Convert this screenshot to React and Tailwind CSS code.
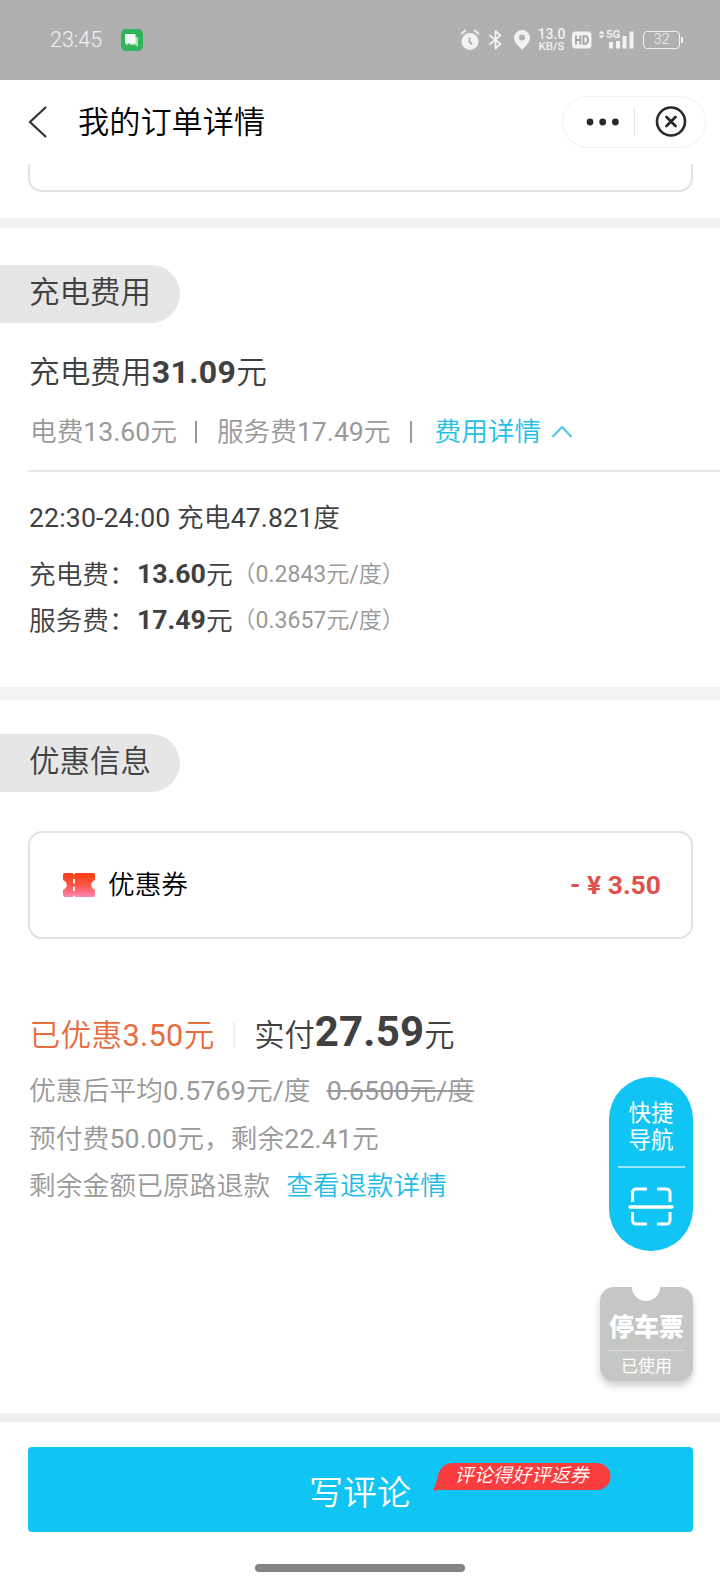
import React from "react";

// Latin digits and signs use the regular weight; the surrounding Chinese text is lighter.
function Mixed({ text }) {
  return text.split(/([0-9.:\/-]+)/).map((part, i) =>
    i % 2 ? (
      <span key={i} className="font-normal">{part}</span>
    ) : (
      part
    )
  );
}

function StatusBar() {
  return (
    <div className="flex h-20 shrink-0 items-center bg-[#b0b0b0] pl-[50px] text-[#f2f2f2]">
      <span className="w-[71px] text-[21.500px] leading-none">23:45</span>
      <svg width="22" height="22" viewBox="0 0 22 22">
        <rect width="22" height="22" rx="5" fill="#2fb457" />
        <path d="M9 8h8v10l-2.5-2H9z" fill="#a5e2b6" />
        <path d="M4 5h10.500v9.500H7.500L5.500 16.500V14.500H4z" fill="#f1fbf4" />
      </svg>
      <svg className="ml-[317px]" width="20" height="22" viewBox="0 0 20 22">
        <circle cx="10" cy="12.500" r="8.500" fill="#f2f2f2" />
        <path d="M1.500 4.500 5.500 1.500M18.500 4.500 14.500 1.500" stroke="#f2f2f2" strokeWidth="1.800" strokeLinecap="round" />
        <path d="M9.500 9v4l2.200 2" stroke="#aaa" strokeWidth="1.700" fill="none" strokeLinecap="round" />
      </svg>
      <svg className="ml-[8px]" width="15" height="22" viewBox="0 0 15 22">
        <path d="M2 6.500 12.500 15 7.500 19.500V2l5 4.500L2 15" stroke="#f2f2f2" strokeWidth="1.700" fill="none" strokeLinejoin="round" strokeLinecap="round" />
      </svg>
      <svg className="ml-[11px]" width="16" height="22" viewBox="0 0 16 22">
        <path d="M8 1a8 8 0 0 1 8 8c0 5-5.500 9-8 12C5.500 18 0 14 0 9a8 8 0 0 1 8-8z" fill="#f2f2f2" />
        <circle cx="8" cy="8.500" r="3" fill="#b0b0b0" />
      </svg>
      <div className="ml-[8px] flex w-[27px] flex-col items-center pt-[1px] font-medium">
        <span className="text-[14px] leading-[11px]">13.0</span>
        <span className="text-[11.500px] leading-[12px]">KB/S</span>
      </div>
      <svg className="ml-[7px]" width="20" height="18" viewBox="0 0 20 18">
        <rect x="0" y="0.500" width="19.500" height="17" rx="3.500" fill="#f2f2f2" />
        <path d="M4 4.500v9M8.500 4.500v9M4 9h4.500M11.500 5.200h1.500c4 0 4 7.600 0 7.600h-1.500z" stroke="#a2a2a2" strokeWidth="1.800" fill="none" />
      </svg>
      <div className="relative ml-[6px] h-[20px] w-[37px]">
        <svg width="37" height="20" viewBox="0 0 37 20">
          <path d="M0.500 3.800 3.500 0.500 6.500 3.800zM0.500 5.200 3.500 8.500 6.500 5.200z" fill="#f2f2f2" />
          <path d="M11 12h4v6.500h-4zM18 11h4v7.500h-4zM24.500 6h4v12.500h-4zM31.500 1.500h4v17h-4z" fill="#f2f2f2" />
        </svg>
        <span className="absolute left-[8px] top-[-1px] text-[11.500px] font-semibold leading-[10px]">5G</span>
      </div>
      <div className="ml-[8px] flex h-[18px] w-[37px] items-center justify-center rounded-[4px] border-[1.500px] border-[#f2f2f2] text-[14.500px] leading-none">32</div>
      <div className="ml-[1px] h-[6px] w-[1.500px] bg-[#f2f2f2]" />
    </div>
  );
}

function Header() {
  return (
    <div className="flex h-[84px] shrink-0 items-start pl-[28px] pr-[14px] pt-4">
      <svg className="mt-[9px]" width="20" height="34" viewBox="0 0 20 34">
        <path d="M18 2 2 17l16 15" fill="none" stroke="#333" strokeWidth="2.200" />
      </svg>
      <h1 className="ml-[30px] text-[31.200px] leading-[54px] text-black">我的订单详情</h1>
      <div className="ml-auto flex h-[52px] w-[144px] items-center rounded-full border border-[#f0f0f0]">
        <svg className="ml-[23px]" width="34" height="8" viewBox="0 0 34 8">
          <circle cx="4" cy="4" r="3.400" fill="#2a2a2a" />
          <circle cx="16.700" cy="4" r="3.400" fill="#2a2a2a" />
          <circle cx="29.400" cy="4" r="3.400" fill="#2a2a2a" />
        </svg>
        <div className="ml-[14px] h-[28px] w-px bg-[#e2e2e2]" />
        <svg className="ml-[20px]" width="32" height="32" viewBox="0 0 32 32" fill="none" stroke="#2a2a2a">
          <circle cx="16" cy="15.500" r="14" strokeWidth="2.600" />
          <path d="m11.500 11 9 9M20.500 11l-9 9" strokeWidth="2.800" strokeLinecap="round" />
        </svg>
      </div>
    </div>
  );
}

function SectionTag({ children }) {
  return (
    <h2 className="h-[58px] w-[180px] shrink-0 rounded-r-full bg-[#e6e6e6] pl-[29px] text-[30.500px] leading-[56px] text-[#404040]">
      {children}
    </h2>
  );
}

function RateRow({ label, amount, rate }) {
  return (
    <div className="flex h-[46px] items-center text-[26.670px] leading-[46px] text-[#404040]">
      <span className="w-[108px]">{label}：</span>
      <b className="-mt-[2px] font-bold">{amount}</b>
      <span>元</span>
      <span className="text-[23px] text-[#999]">
        <Mixed text={`（${rate}元/度）`} />
      </span>
    </div>
  );
}

function QuickNav() {
  return (
    <div className="absolute left-[609px] top-[1077px] flex h-[174px] w-[84px] flex-col items-center rounded-full bg-[#10c5f3] pt-[23px] text-white">
      <span className="text-[22.500px] font-normal leading-[27px]">快捷</span>
      <span className="text-[22.500px] font-normal leading-[27px]">导航</span>
      <div className="mt-[12px] h-[2px] w-[67px] bg-[#9be8fb]" />
      <svg className="mt-[19px]" width="46" height="40" viewBox="0 0 46 40" fill="none" stroke="white" strokeWidth="3">
        <path d="M4.500 15V6q0-4 4-4H19M29 2h9q4 0 4 4v9M42 25v8q0 4-4 4h-9M19 37H8.500q-4 0-4-4v-8" />
        <path d="M2 20h42" strokeWidth="3.500" strokeLinecap="round" />
      </svg>
    </div>
  );
}

function ParkingTicket() {
  return (
    <div className="absolute left-[600px] top-[1287px] h-[94px] w-[93px] rounded-[14px] bg-[#c5c7c5] shadow-[0_5px_7px_rgba(0,0,0,0.180)]">
      <div className="absolute left-[32px] top-[-14px] h-[28px] w-[28px] rounded-full bg-white [clip-path:inset(13px_0_0_0)]" />
      <div className="flex h-full flex-col items-center pt-[25px] text-white">
        <span className="text-[25px] font-black leading-[32px]">停车票</span>
        <div className="mt-[6px] h-px w-[77px] bg-[#dedede]" />
        <span className="mt-[4px] text-[17px] font-normal leading-[22px]">已使用</span>
      </div>
    </div>
  );
}

export default function App() {
  return (
    <div className="relative flex h-[1584px] w-[720px] flex-col overflow-hidden bg-white font-['Roboto','Noto_Sans_CJK_SC',sans-serif] font-[350]">
      <StatusBar />
      <Header />
      <div className="mx-[28px] mr-[27px] h-[28px] shrink-0 rounded-b-[14px] border-2 border-t-0 border-[#e2e2e2]" />
      <div className="mt-[26px] h-[10px] shrink-0 bg-[#f2f2f2]" />

      <section className="flex h-[459px] shrink-0 flex-col pt-[37px]">
        <SectionTag>充电费用</SectionTag>
        <div className="mt-[27px] flex h-[46px] items-center pl-[29px] text-[30.670px] leading-[46px] text-[#404040]">
          <span>充电费用</span>
          <b className="-mt-[2px] text-[32px] font-bold tracking-[0.400px]">31.09</b>
          <span>元</span>
        </div>
        <div className="mt-[16px] flex h-[40px] items-center pl-[30px] text-[26.670px] leading-[40px] text-[#999]">
          <span>
            <Mixed text="电费13.60元" />
          </span>
          <div className="ml-[18px] h-[22px] w-[2px] bg-[#999]" />
          <span className="ml-[20px]">
            <Mixed text="服务费17.49元" />
          </span>
          <div className="ml-[19px] h-[22px] w-[2px] bg-[#999]" />
          <a className="ml-[23px] text-[#22bfe8]">费用详情</a>
          <svg className="ml-[10px]" width="22" height="14" viewBox="0 0 22 14">
            <path d="m1.500 12 9.500-10 9.500 10" fill="none" stroke="#4cc8e8" strokeWidth="2" />
          </svg>
        </div>
        <div className="ml-[28px] mt-[18px] h-[2px] shrink-0 bg-[#e6e6e6]" />
        <div className="mt-[26px] pl-[29px] text-[26.670px] leading-[40px] tracking-[0.120px] text-[#404040]">
          <Mixed text="22:30-24:00 充电47.821度" />
        </div>
        <div className="mt-[14px] pl-[29px]">
          <RateRow label="充电费" amount="13.60" rate="0.2843" />
          <RateRow label="服务费" amount="17.49" rate="0.3657" />
        </div>
      </section>
      <div className="h-[13px] shrink-0 bg-[#f2f2f2]" />

      <section className="flex h-[713px] shrink-0 flex-col pt-[34px]">
        <SectionTag>优惠信息</SectionTag>
        <div className="ml-[28px] mr-[27px] mt-[39px] flex h-[108px] shrink-0 items-center rounded-[14px] border-2 border-[#e2e2e2] pl-[33px] pr-[30px] text-[26.670px]">
          <svg width="32" height="24" viewBox="0 0 32 24">
            <defs>
              <linearGradient id="coupon" x1="0" y1="0" x2="0" y2="1">
                <stop offset="0" stopColor="#f93d12" />
                <stop offset="0.500" stopColor="#fb5544" />
                <stop offset="1" stopColor="#fe86b4" />
              </linearGradient>
            </defs>
            <path d="M2 0h7.500l1.500 2 1.500-2H30q2 0 2 2v5c-5 2-5 8 0 10V22q0 2-2 2H12.500L11 22l-1.500 2H2q-2 0-2-2v-5c5-2 5-8 0-10V2Q0 0 2 0z" fill="url(#coupon)" />
            <path d="M11 6v4.500M11 13.500V18" stroke="#fff0ea" strokeWidth="2" />
          </svg>
          <span className="ml-[13px] text-black">优惠券</span>
          <b className="ml-auto text-[26.500px] font-bold text-[#e0504f]">- ¥ 3.50</b>
        </div>

        <div className="mt-[68px] flex h-[56px] shrink-0 items-center pl-[29.500px] text-[30.670px] leading-[56px]">
          <span className="mt-px tracking-[0.350px] text-[#e86c40]">
            <Mixed text="已优惠3.50元" />
          </span>
          <div className="ml-[18.500px] h-[26px] w-[2px] bg-[#eee]" />
          <div className="ml-[19px] mt-px flex items-baseline text-[#404040]">
            <span className="text-[30.300px]">实付</span>
            <b className="text-[42px] font-bold leading-[50px] tracking-[0.150px]">27.59</b>
            <span className="text-[30.300px]">元</span>
          </div>
        </div>
        <div className="mt-[5px] flex flex-col pl-[29px] text-[26.670px] leading-[47.500px] tracking-[0.150px] text-[#999]">
          <div className="flex">
            <span>
              <Mixed text="优惠后平均0.5769元/度" />
            </span>
            <span className="ml-[16px] line-through">
              <Mixed text="0.6500元/度" />
            </span>
          </div>
          <div>
            <Mixed text="预付费50.00元，剩余22.41元" />
          </div>
          <div className="flex">
            <span>剩余金额已原路退款</span>
            <a className="ml-[16px] text-[#1fbde6]">查看退款详情</a>
          </div>
        </div>
      </section>

      <div className="h-[9px] shrink-0 bg-[#efefef]" />
      <footer className="flex grow flex-col items-center pt-[25px]">
        <button className="relative h-[85px] w-[665px] shrink-0 rounded-[4px] bg-[#10c5f3] text-[34px] text-white">
          <span className="block pt-[7px] leading-[78px]">写评论</span>
          <span className="absolute left-[405px] top-[15px] block h-[29px] w-[178px]">
            <svg className="absolute inset-0" width="178" height="29" viewBox="0 0 178 29">
              <path d="M20 1H164a13.500 13.500 0 0 1 0 27H14Q6 27 1 29Q0 28 1 26C4 21 4 15 6 10Q10 1 20 1z" fill="#f93c3e" />
            </svg>
            <span className="relative block pl-[22px] text-left text-[19.200px] italic leading-[28px]">评论得好评返券</span>
          </span>
        </button>
        <div className="mt-[32px] h-[8px] w-[210px] rounded-full bg-[#858585]" />
      </footer>
      <QuickNav />
      <ParkingTicket />
    </div>
  );
}
